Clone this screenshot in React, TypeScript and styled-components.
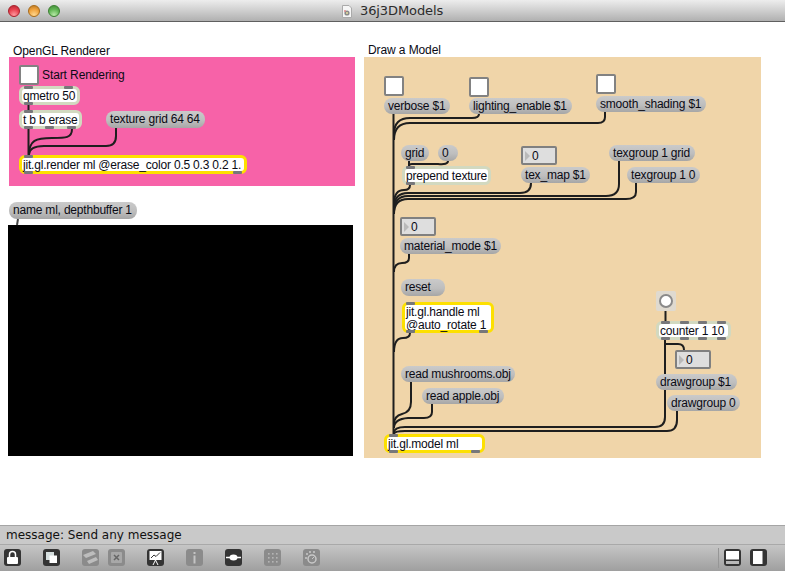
import React from "react";
import styled, { createGlobalStyle, css } from "styled-components";

const Global = createGlobalStyle`
  html, body { margin: 0; padding: 0; background: #fff; }
  #root { width: 785px; height: 571px; }
`;

const Window = styled.div`
  width: 785px; height: 571px; display: flex; flex-direction: column; overflow: hidden;
  font-family: "Liberation Sans", Arial, sans-serif;
`;
const TitleBar = styled.header`
  height: 21px; flex: none; display: flex; align-items: center; justify-content: space-between;
  padding: 0 0 0 8px; position: relative; box-sizing: content-box;
  background: linear-gradient(#ededed, #d2d2d2 45%, #b0b0b0);
  border-bottom: 1px solid #5f5f5f;
`;
const Lights = styled.div`display: flex; gap: 8px;`;
const Light = styled.span<{ $c: string; $d: string; $h: string }>`
  width: 12px; height: 12px; border-radius: 50%; box-sizing: border-box;
  border: 1px solid ${p => p.$d};
  background: radial-gradient(circle at 50% 90%, ${p => p.$h} 0, ${p => p.$c} 55%, ${p => p.$d} 110%);
`;
const Title = styled.div`
  position: absolute; left: 342px; top: 4px; display: flex; align-items: center; gap: 8px;
  font: 13px "DejaVu Sans", sans-serif; color: #2c2c2c; line-height: 14px; letter-spacing: -0.1px;
`;
const Canvas = styled.main`flex: 1; min-height: 0; position: relative; background: #fff; overflow: hidden;`;
const Panel = styled.div<{ $x: number; $y: number; $w: number; $h: number; $bg: string }>`
  position: absolute; left: ${p => p.$x}px; top: ${p => p.$y}px; width: ${p => p.$w}px; height: ${p => p.$h}px;
  background: ${p => p.$bg};
`;
const Label = styled.div<{ $x: number; $y: number }>`
  position: absolute; left: ${p => p.$x}px; top: ${p => p.$y}px; font-size: 12px; line-height: 14px; color: #0a0a14; white-space: nowrap;
  letter-spacing: -0.1px;
`;
type Box = { $x: number; $y: number; $w: number; $h: number };
const place = css<Box>`
  position: absolute; left: ${p => p.$x}px; top: ${p => p.$y}px; width: ${p => p.$w}px; height: ${p => p.$h}px; box-sizing: border-box;
`;
const MessageBox = styled.div<Box>`
  ${place}; border-radius: 8px; padding: 1px 0 0 4px; font-size: 12px; line-height: 14px; color: #0a0a14; white-space: nowrap; letter-spacing: -0.2px;
  background: linear-gradient(#cacaca, #bebebe 55%, #a6a6a6);
`;
const ObjectBox = styled.div<Box & { $tone: "plain" | "jit" }>`
  ${place}; border-radius: 6px; padding: 1px 0 0 1px; font-size: 12px; line-height: 13px; color: #0a0a14; white-space: pre; letter-spacing: -0.2px;
  background: #fff; border: 3px solid ${p => (p.$tone === "jit" ? "#fde000" : "#d2d9c0")};
`;
const Toggle = styled.div<Box>`
  ${place}; background: #fff; border: 2px solid #828282; border-radius: 2px;
`;
const NumberBox = styled.div<Box>`
  ${place}; background: #dedede; border: 2px solid #808080; border-radius: 2px; font-size: 12px; line-height: 14px; color: #0a0a14;
  padding: 1px 0 0 9px;
  &::before {
    content: ""; position: absolute; left: 2px; top: 3px;
    border-left: 5px solid #b9b9b9; border-top: 5px solid transparent; border-bottom: 5px solid transparent;
  }
`;
const BangBox = styled.div<Box>`
  ${place}; background: #dfdad0; border-radius: 2px; display: flex; align-items: center; justify-content: center;
  &::after { content: ""; width: 10px; height: 10px; background: #fff; border: 2px solid #8a8a8a; border-radius: 50%; }
`;
const Port = styled.i<{ $l: number; $bottom?: boolean }>`
  position: absolute; left: ${p => p.$l}px; width: 9px; height: 3px; background: #77777a; border-radius: 1px;
  ${p => (p.$bottom ? "bottom: -3px;" : "top: -3px;")}
`;
const Wires = styled.svg`position: absolute; left: 0; top: 0; pointer-events: none;`;
const Wire = styled.path`fill: none; stroke: #1e1e1e; stroke-width: 2;`;

const StatusLine = styled.div`
  height: 18px; flex: none; display: flex; align-items: center; padding-left: 6px; background: #c9c9c9;
  border-top: 1px solid #a5a5a5; border-bottom: 1px solid #a9a9a9;
  font: 12px/16px "DejaVu Sans", sans-serif; color: #111;
`;
const Toolbar = styled.footer`
  height: 26px; flex: none; display: flex; align-items: center; padding: 0 18px 1px 4px; gap: 22px; box-sizing: border-box;
  background: linear-gradient(#c6c6c6, #9f9f9f);
`;
const ToolGroup = styled.div`display: flex; gap: 22px;`;
const TightGroup = styled.div`display: flex; gap: 9px;`;
const Tool = styled.div<{ $off?: boolean }>`
  width: 17px; height: 17px; border-radius: 3px; background: ${p => (p.$off ? "#8b8b8b" : "#343434")}; flex: none;
  display: flex; align-items: center; justify-content: center; overflow: hidden;
`;
const Spacer = styled.div`flex: 1;`;
const Divider = styled.div`width: 1px; height: 20px; background: #969696; margin-right: -17px;`;

const Doc = () => (
  <svg width="10" height="13" viewBox="0 0 10 13">
    <path d="M.5.5H7L9.5 3V12.5H.5Z" fill="#f6f6f6" stroke="#aaa" />
    <circle cx="5" cy="8" r="2.6" fill="#8b8b8b" />
    <circle cx="5" cy="8" r="1" fill="#e8e0a0" />
    <circle cx="3" cy="6" r="1" fill="#d88" />
  </svg>
);

const ico = { width: 17, height: 17, viewBox: "0 0 17 17" };

type N = { x: number; y: number; w: number; h: number; text: string; top?: number[]; bottom?: number[] };

const messages: N[] = [
  { x: 106, y: 89, w: 99, h: 17, text: "texture grid 64 64" },
  { x: 9, y: 180, w: 128, h: 17, text: "name ml, depthbuffer 1" },
  { x: 384, y: 76, w: 66, h: 16, text: "verbose $1" },
  { x: 469, y: 76, w: 103, h: 16, text: "lighting_enable $1" },
  { x: 596, y: 74, w: 110, h: 16, text: "smooth_shading $1" },
  { x: 401, y: 123, w: 28, h: 16, text: "grid" },
  { x: 438, y: 123, w: 20, h: 16, text: "0" },
  { x: 521, y: 145, w: 69, h: 16, text: "tex_map $1" },
  { x: 609, y: 123, w: 86, h: 16, text: "texgroup 1 grid" },
  { x: 627, y: 145, w: 73, h: 16, text: "texgroup 1 0" },
  { x: 400, y: 216, w: 101, h: 16, text: "material_mode $1" },
  { x: 401, y: 257, w: 44, h: 17, text: "reset" },
  { x: 401, y: 344, w: 114, h: 16, text: "read mushrooms.obj" },
  { x: 422, y: 366, w: 82, h: 16, text: "read apple.obj" },
  { x: 656, y: 352, w: 81, h: 16, text: "drawgroup $1" },
  { x: 667, y: 373, w: 73, h: 16, text: "drawgroup 0" },
];

const objects: (N & { tone: "plain" | "jit" })[] = [
  { x: 19, y: 64, w: 61, h: 19, text: "qmetro 50", tone: "plain", top: [5, 45], bottom: [5] },
  { x: 19, y: 88, w: 63, h: 19, text: "t b b erase", tone: "plain", top: [5], bottom: [5, 26, 48] },
  { x: 19, y: 133, w: 228, h: 19, text: "jit.gl.render ml @erase_color 0.5 0.3 0.2 1.", tone: "jit", top: [5], bottom: [5, 214] },
  { x: 402, y: 144, w: 89, h: 19, text: "prepend texture", tone: "plain", top: [4], bottom: [4] },
  { x: 402, y: 280, w: 92, h: 31, text: "jit.gl.handle ml\n@auto_rotate 1", tone: "jit", top: [4], bottom: [4, 77] },
  { x: 384, y: 412, w: 101, h: 19, text: "jit.gl.model ml", tone: "jit", top: [5], bottom: [5, 87] },
  { x: 656, y: 299, w: 75, h: 19, text: "counter 1 10", tone: "plain", top: [5, 24, 42, 61], bottom: [5, 24, 42, 61] },
];

const toggles = [[19, 43], [384, 54], [469, 55], [596, 52]];
const numbers: [number, number][] = [[521, 124], [400, 195], [675, 328]];

const wires = [
  "M28.5 83V88", "M28.5 107V133",
  "M72 107C72 116 66 116 52 116C36 116 29 118 29 133",
  "M116 106V114Q116 124 106 124H44Q29 124 29 133",
  "M393.5 92V412",
  "M479 92Q479 96 472 96H410Q394 96 394 112",
  "M605 90V95Q605 101 598 101H410Q394 101 394 118",
  "M409 139V144", "M448 139Q448 143 438 142H412Q409 142 409 144",
  "M410 163Q410 168 404 168Q394 168 394 182",
  "M531 161Q531 171 520 171H408Q394 171 394 186",
  "M619 139V162Q619 174 606 174H408Q394 174 394 190",
  "M636 161V170Q636 177 626 177H408Q394 177 394 192",
  "M409 232V236Q409 241 402 241Q394 241 394 250",
  "M410 311Q410 316 403 316Q394 316 394 330",
  "M411 360V380Q411 390 402 392Q394 394 394 402",
  "M432 382V390Q432 396 424 396H408Q394 397 394 406",
  "M665 318V395Q665 405 655 405H405Q394 405 394 411",
  "M677 389V398Q677 409 667 409H405Q394 409 394 412",
  "M665 322H678Q684 322 684 328",
  "M665.5 289V299",
];

export default function App() {
  return (
    <Window>
      <Global />
      <TitleBar>
        <Lights>
          <Light $c="#e8424f" $d="#a81f2a" $h="#ff9aa0" />
          <Light $c="#f0a33e" $d="#a86a18" $h="#ffd890" />
          <Light $c="#62b655" $d="#3a7f30" $h="#b8eaa8" />
        </Lights>
        <Title><Doc />36j3DModels</Title>
      </TitleBar>
      <Canvas>
        <Panel $x={9} $y={35} $w={346} $h={129} $bg="#f762a8" />
        <Panel $x={8} $y={203} $w={345} $h={231} $bg="#000" />
        <Panel $x={364} $y={35} $w={397} $h={401} $bg="#f0d5a9" />
        <Label $x={13} $y={22}>OpenGL Renderer</Label>
        <Label $x={368} $y={21}>Draw a Model</Label>
        <Label $x={42} $y={46}>Start Rendering</Label>
        <Wires width="785" height="503">
          {wires.map(d => <Wire key={d} d={d} />)}
          <path d="M18 197L17 203" fill="none" stroke="#444" strokeWidth="2" />
        </Wires>
        {toggles.map(([x, y]) => <Toggle key={x} $x={x} $y={y} $w={20} $h={20} />)}
        {messages.map(m => <MessageBox key={m.text + m.x} $x={m.x} $y={m.y} $w={m.w} $h={m.h}>{m.text}</MessageBox>)}
        {objects.map(o => (
          <ObjectBox key={o.text} $x={o.x} $y={o.y} $w={o.w} $h={o.h} $tone={o.tone}>
            {o.text}
            {o.top?.map(l => <Port key={"t" + l} $l={l - 3} />)}
            {o.bottom?.map(l => <Port key={"b" + l} $l={l - 3} $bottom />)}
          </ObjectBox>
        ))}
        {numbers.map(([x, y]) => <NumberBox key={x} $x={x} $y={y} $w={36} $h={19}>0</NumberBox>)}
        <BangBox $x={656} $y={269} $w={20} $h={20} />
      </Canvas>
      <StatusLine>message: Send any message</StatusLine>
      <Toolbar>
        <ToolGroup>
          <Tool>
            <svg {...ico}><path d="M5.5 8V5.5a3 3 0 0 1 6 0V8" fill="none" stroke="#fff" strokeWidth="1.5" /><rect x="3" y="8" width="11" height="7" rx="1" fill="#fff" /></svg>
          </Tool>
          <Tool>
            <svg {...ico}><rect x="3" y="3" width="8" height="8" fill="#d5dede" /><rect x="6.5" y="6.5" width="7.5" height="7.5" fill="#fff" /></svg>
          </Tool>
          <TightGroup>
            <Tool $off>
              <svg {...ico}><path d="M1 6l10-4 3 3-10 4zM5 12l9-4 2 3-9 4z" fill="#bdbdbd" /></svg>
            </Tool>
            <Tool $off>
              <svg {...ico}><rect x="3" y="3" width="11" height="11" rx="1" fill="#a8a8a8" /><path d="M6 6l5 5M11 6l-5 5" stroke="#666" strokeWidth="1.5" /></svg>
            </Tool>
          </TightGroup>
          <Tool>
            <svg {...ico}><rect x="2.5" y="2" width="12" height="9" fill="#fff" /><path d="M4 9l3-3 2 1.5 4-4" fill="none" stroke="#333" /><path d="M8.5 11L6 16M8.5 11L11 16" stroke="#fff" /></svg>
          </Tool>
          <Tool $off>
            <svg {...ico}><rect x="7.5" y="3" width="2" height="2" fill="#c4c4c4" /><rect x="7.5" y="6.5" width="2" height="8" fill="#c4c4c4" /></svg>
          </Tool>
          <Tool>
            <svg {...ico}><path d="M1 8.5h15" stroke="#fff" strokeWidth="1.5" /><ellipse cx="8.5" cy="8.5" rx="4" ry="3" fill="#fff" /></svg>
          </Tool>
          <Tool $off>
            <svg {...ico} fill="#b5b5b5">{[4, 8, 12].flatMap(y => [4, 8, 12].map(x => <rect key={`${x}${y}`} x={x} y={y} width="1.6" height="1.6" />))}</svg>
          </Tool>
          <Tool $off>
            <svg {...ico}><circle cx="9" cy="10" r="4" fill="none" stroke="#c8c8c8" strokeWidth="1.5" /><path d="M9 10l2.5-2.5" stroke="#c8c8c8" /><g fill="#c8c8c8"><circle cx="4" cy="5" r="1" /><circle cx="7" cy="3" r="1" /><circle cx="11" cy="3" r="1" /><circle cx="3" cy="9" r="1" /></g></svg>
          </Tool>
        </ToolGroup>
        <Spacer />
        <Divider />
        <TightGroup>
          <Tool>
            <svg {...ico}><rect x="2" y="2" width="13" height="8.5" fill="#fff" /><rect x="2" y="12" width="13" height="3" fill="#b8b8b8" /></svg>
          </Tool>
          <Tool>
            <svg {...ico}><rect x="3" y="2" width="9.5" height="13" fill="#fff" /></svg>
          </Tool>
        </TightGroup>
      </Toolbar>
    </Window>
  );
}
